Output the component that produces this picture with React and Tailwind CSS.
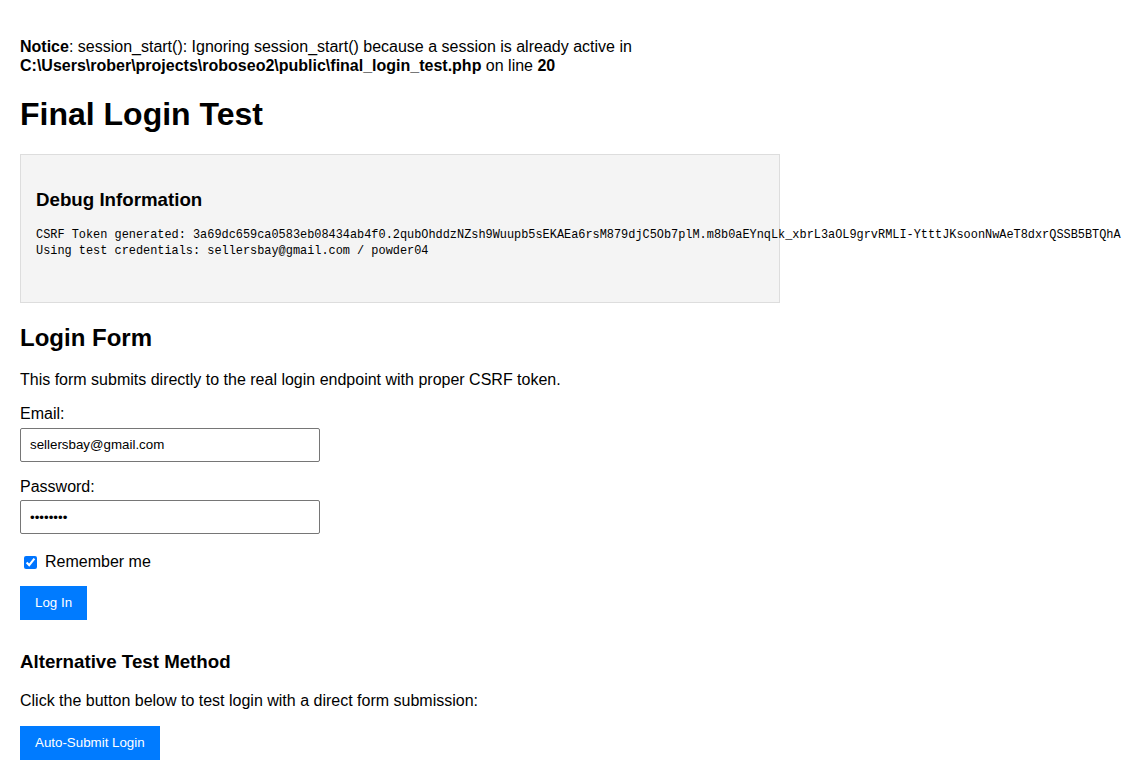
export default function App() {
  const token =
    "3a69dc659ca0583eb08434ab4f0.2qubOhddzNZsh9Wuupb5sEKAEa6rsM879djC5Ob7plM.m8b0aEYnqLk_xbrL3aOL9grvRMLI-YtttJKsoonNwAeT8dxrQSSB5BTQhA";

  return (
    <div className="min-h-screen bg-white p-[20px] text-[16px] leading-[1.15] text-black font-['Liberation_Sans',Arial,sans-serif]">
      {/* PHP notice */}
      <div>
        <br />
        <b>Notice</b>: session_start(): Ignoring session_start() because a session is already active in
        <br />
        <b>C:\Users\rober\projects\roboseo2\public\final_login_test.php</b> on line <b>20</b>
      </div>

      <h1 className="mt-[21px] mb-[21px] text-[32px] font-bold leading-[1.15]">Final Login Test</h1>

      <div className="w-[760px] border border-[#dddddd] bg-[#f4f4f4] p-[15px]">
        <h3 className="mt-[19px] mb-[18px] text-[18.72px] font-bold leading-[1.15]">Debug Information</h3>
        <pre className="mt-[15px] mb-[13px] whitespace-pre text-[11.9px] leading-[15.3px] font-['Liberation_Mono','DejaVu_Sans_Mono',monospace]">
          {`CSRF Token generated: ${token}\nUsing test credentials: sellersbay@gmail.com / powder04\n\n`}
        </pre>
      </div>

      <h2 className="mt-[21px] mb-[19px] text-[24px] font-bold leading-[1.15]">Login Form</h2>
      <p className="mb-[16px]">This form submits directly to the real login endpoint with proper CSRF token.</p>

      <form onSubmit={(e) => e.preventDefault()}>
        <div className="mb-[16px]">
          <label className="mb-[4px] block">Email:</label>
          <input
            type="email"
            readOnly
            defaultValue="sellersbay@gmail.com"
            className="block h-[34px] w-[300px] rounded-[2px] border border-[#767676] bg-white px-[9px] text-[13.33px] outline-none"
          />
        </div>
        <div className="mb-[18px]">
          <label className="mb-[4px] block">Password:</label>
          <input
            type="password"
            readOnly
            defaultValue="powder04"
            className="block h-[34px] w-[300px] rounded-[2px] border border-[#767676] bg-white px-[9px] text-[13.33px] outline-none"
          />
        </div>
        <div className="mb-[14px] flex items-center h-[20px]">
          <input type="checkbox" defaultChecked className="ml-[4px] mr-[8px] h-[13px] w-[13px] accent-[#0075ff]" />
          <span>Remember me</span>
        </div>
        <button
          type="submit"
          className="h-[34px] bg-[#007bff] px-[15px] text-[13.33px] text-white"
        >
          Log In
        </button>
      </form>

      <h3 className="mt-[31px] mb-[19px] text-[18.72px] font-bold leading-[1.15]">Alternative Test Method</h3>
      <p className="mb-[16px]">Click the button below to test login with a direct form submission:</p>
      <button type="button" className="h-[34px] bg-[#007bff] px-[15px] text-[13.33px] text-white">
        Auto-Submit Login
      </button>
    </div>
  );
}
